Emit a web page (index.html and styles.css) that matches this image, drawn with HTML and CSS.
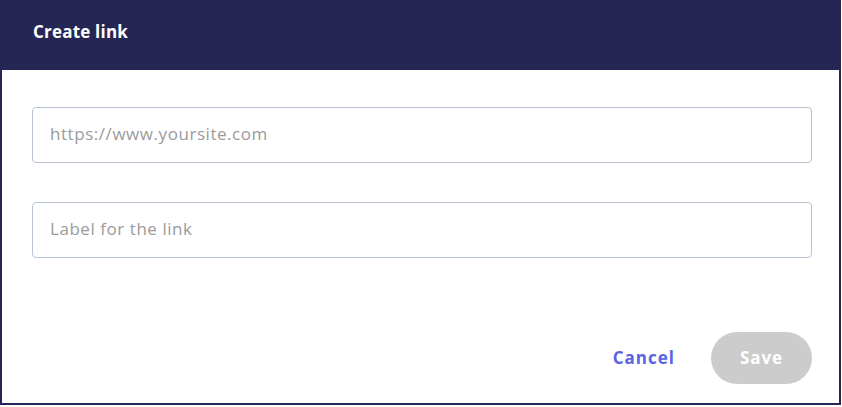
FILE: index.html
```html
<!DOCTYPE html>
<html>
<head>
<meta charset="utf-8">
<link rel="stylesheet" href="styles.css">
</head>
<body>
<div class="dialog">
  <div class="dialog-header">
    <h1 class="dialog-title">Create link</h1>
  </div>
  <div class="dialog-body">
    <input class="field" type="text" placeholder="https://www.yoursite.com">
    <input class="field" type="text" placeholder="Label for the link">
  </div>
  <div class="dialog-footer">
    <button class="btn-cancel" type="button">Cancel</button>
    <button class="btn-save" type="button">Save</button>
  </div>
</div>
</body>
</html>
```
FILE: styles.css
```css
* { box-sizing: border-box; }
html, body { margin: 0; padding: 0; background: #ffffff; }
body { font-family: "Open Sans", "Liberation Sans", sans-serif; }

.dialog {
  width: 841px;
  height: 405px;
  border: 2px solid #262654;
  border-top: 0;
  display: flex;
  flex-direction: column;
  background: #ffffff;
}

.dialog-header {
  height: 70px;
  margin: 0 -2px;
  background: #262654;
  display: flex;
  align-items: center;
  padding: 0 0 8px 33px;
}

.dialog-title {
  margin: 0;
  color: #ffffff;
  font-size: 17px;
  font-weight: 700;
  letter-spacing: 0.2px;
}

.dialog-body {
  display: flex;
  flex-direction: column;
  gap: 39px;
  padding: 37px 27px 0 30px;
}

.field {
  height: 56px;
  width: 100%;
  border: 1px solid #b9c4d2;
  border-radius: 4px;
  padding: 0 17px 3px;
  font-family: inherit;
  font-size: 17px;
  letter-spacing: 0.55px;
  color: #333;
  outline: none;
}
.field::placeholder { color: #9b9b9b; }

.dialog-footer {
  margin-top: auto;
  display: flex;
  justify-content: flex-end;
  align-items: center;
  gap: 36px;
  padding: 0 27px 19px 0;
}

.btn-cancel {
  background: none;
  border: 0;
  padding: 0 0 2px;
  font-family: inherit;
  font-size: 17px;
  font-weight: 700;
  letter-spacing: 1px;
  color: #5a63e2;
}

.btn-save {
  width: 101px;
  height: 52px;
  border: 0;
  border-radius: 26px;
  background: #cccccc;
  color: #ffffff;
  font-family: inherit;
  font-size: 17px;
  font-weight: 700;
  letter-spacing: 0.9px;
  padding-bottom: 2px;
}
```
